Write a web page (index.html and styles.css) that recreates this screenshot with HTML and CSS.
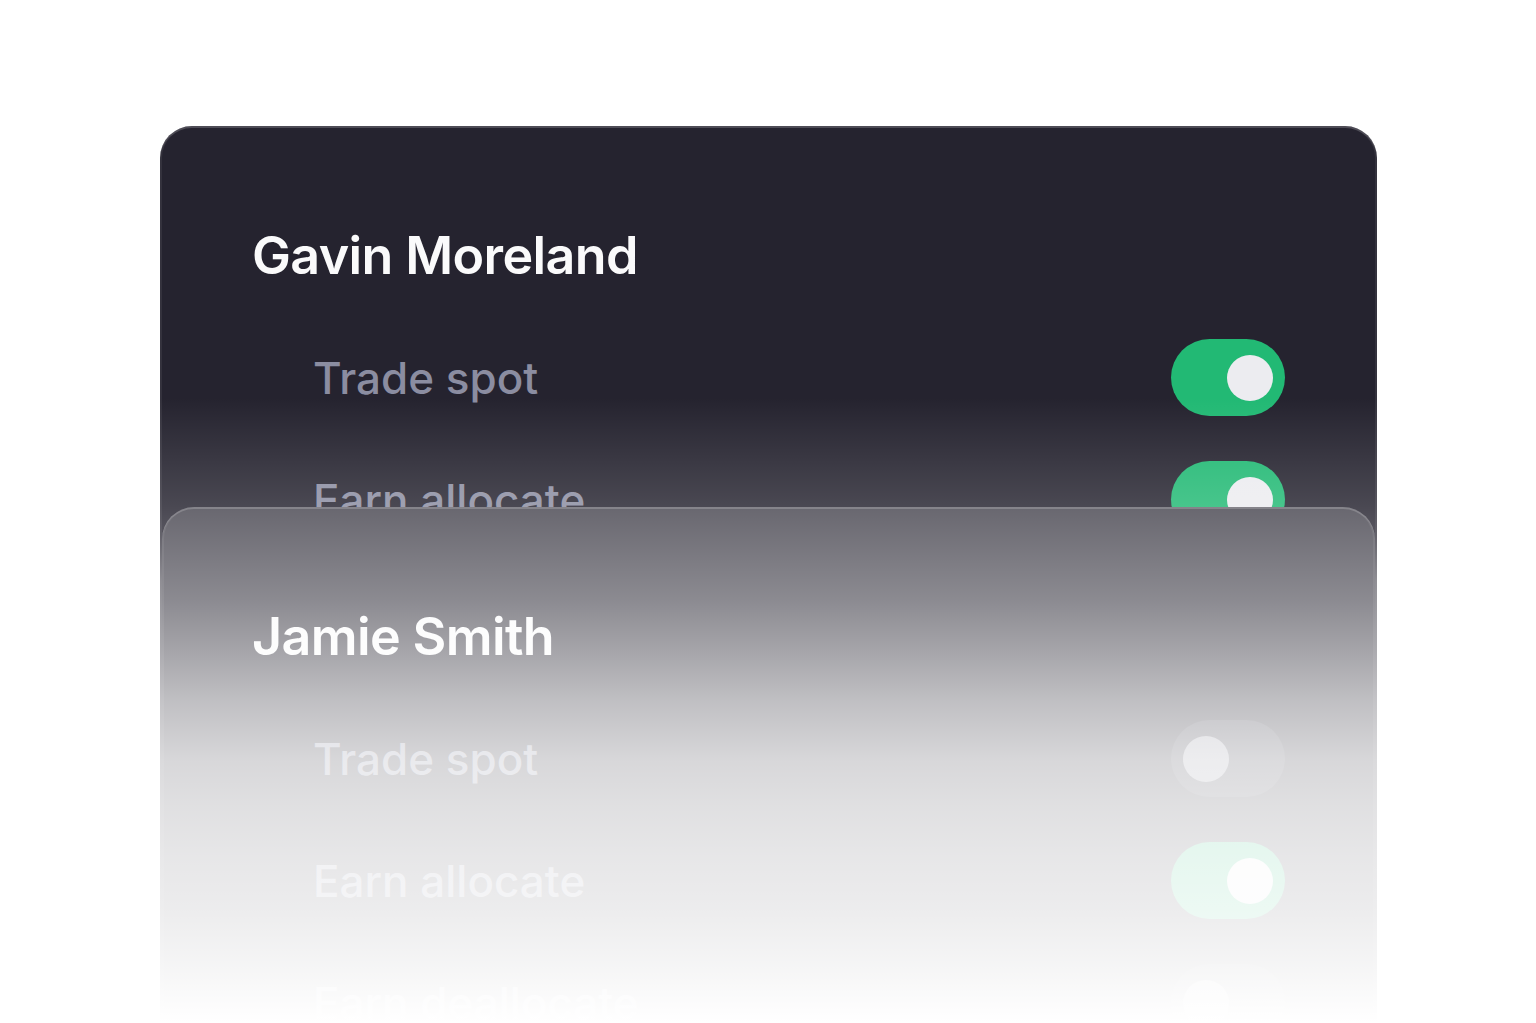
FILE: index.html
```html
<!DOCTYPE html>
<html lang="en">
<head>
    <meta charset="UTF-8">
    <meta name="viewport" content="width=device-width, initial-scale=1.0">
    <title>Account permissions</title>
    <link rel="stylesheet" href="styles.css">
</head>
<body>

    <main class="stack">

        <section class="account account--back">
            <h2 class="account-name">Gavin Moreland</h2>
            <ul class="perms">
                <li class="perm">
                    <span class="perm-label">Trade spot</span>
                    <span class="switch is-on"><span class="knob"></span></span>
                </li>
                <li class="perm">
                    <span class="perm-label">Earn allocate</span>
                    <span class="switch is-on"><span class="knob"></span></span>
                </li>
            </ul>
        </section>

        <section class="account account--front">
            <h2 class="account-name">Jamie Smith</h2>
            <ul class="perms">
                <li class="perm">
                    <span class="perm-label">Trade spot</span>
                    <span class="switch"><span class="knob"></span></span>
                </li>
                <li class="perm">
                    <span class="perm-label">Earn allocate</span>
                    <span class="switch is-on"><span class="knob"></span></span>
                </li>
                <li class="perm">
                    <span class="perm-label">Earn deallocate</span>
                    <span class="switch"><span class="knob"></span></span>
                </li>
            </ul>
        </section>

    </main>

</body>
</html>
```

FILE: styles.css
```css
body {
    margin: 0;
    height: 1023px;
    overflow: hidden;
    background-color: #fff;
    font-family: Inter, "Liberation Sans", sans-serif;
}

/* both cards share one grid cell, the second one sits lower */
.stack {
    display: grid;
    width: 1217px;
    margin-left: 160px;
    padding-top: 126px;
}

.account {
    grid-area: 1 / 1;
    position: relative;
    box-sizing: border-box;
    padding: 98px 92px 92px;
    border-radius: 32px;
    background-color: #25232f;
    box-shadow: inset 0 2px 0 rgba(255, 255, 255, 0.13),
                inset 0 0 0 2px rgba(255, 255, 255, 0.07);
}

/* white wash that fades the cards out towards the bottom */
.account::after {
    content: "";
    position: absolute;
    inset: 0;
    border-radius: inherit;
    pointer-events: none;
}

.account--back::after {
    background: linear-gradient(to bottom,
        rgba(255, 255, 255, 0) 272px,
        rgba(255, 255, 255, 0.17) 380px,
        rgba(255, 255, 255, 0.24) 410px,
        rgba(255, 255, 255, 0.45) 455px,
        rgba(255, 255, 255, 0.59) 524px,
        rgba(255, 255, 255, 0.71) 574px,
        rgba(255, 255, 255, 0.82) 634px,
        rgba(255, 255, 255, 0.86) 681px,
        rgba(255, 255, 255, 0.89) 731px,
        rgba(255, 255, 255, 0.915) 781px,
        rgba(255, 255, 255, 0.95) 831px,
        rgba(255, 255, 255, 0.985) 876px,
        #fff 896px);
}

.account--front {
    margin: 381px 2px 0;
    padding-left: 90px;
    padding-right: 90px;
}

.account--front::after {
    background: linear-gradient(to bottom,
        rgba(255, 255, 255, 0.31) 0,
        rgba(255, 255, 255, 0.47) 93px,
        rgba(255, 255, 255, 0.59) 143px,
        rgba(255, 255, 255, 0.71) 193px,
        rgba(255, 255, 255, 0.82) 253px,
        rgba(255, 255, 255, 0.86) 300px,
        rgba(255, 255, 255, 0.89) 350px,
        rgba(255, 255, 255, 0.915) 400px,
        rgba(255, 255, 255, 0.95) 450px,
        rgba(255, 255, 255, 0.985) 495px,
        #fff 515px);
}

.account-name {
    margin: 0;
    font-size: 52px;
    line-height: 64px;
    font-weight: 600;
    letter-spacing: -0.012em;
    color: #fafafb;
}

.perms {
    list-style: none;
    margin: 51px 0 0;
    padding: 0 0 0 61px;
    display: flex;
    flex-direction: column;
    gap: 45px;
}

.perm {
    display: flex;
    align-items: center;
    justify-content: space-between;
    height: 77px;
}

.perm-label {
    font-size: 44px;
    font-weight: 500;
    color: #8b8da1;
}

/* toggle */
.switch {
    display: flex;
    align-items: center;
    box-sizing: border-box;
    width: 114px;
    height: 77px;
    padding: 0 12px;
    border-radius: 39px;
    background-color: #3a3946;
}

.switch.is-on {
    justify-content: flex-end;
    background-color: #22b974;
}

.knob {
    width: 46px;
    height: 46px;
    border-radius: 50%;
    background-color: #9a9aa6;
}

.switch.is-on .knob {
    background-color: #ececf0;
}
```
